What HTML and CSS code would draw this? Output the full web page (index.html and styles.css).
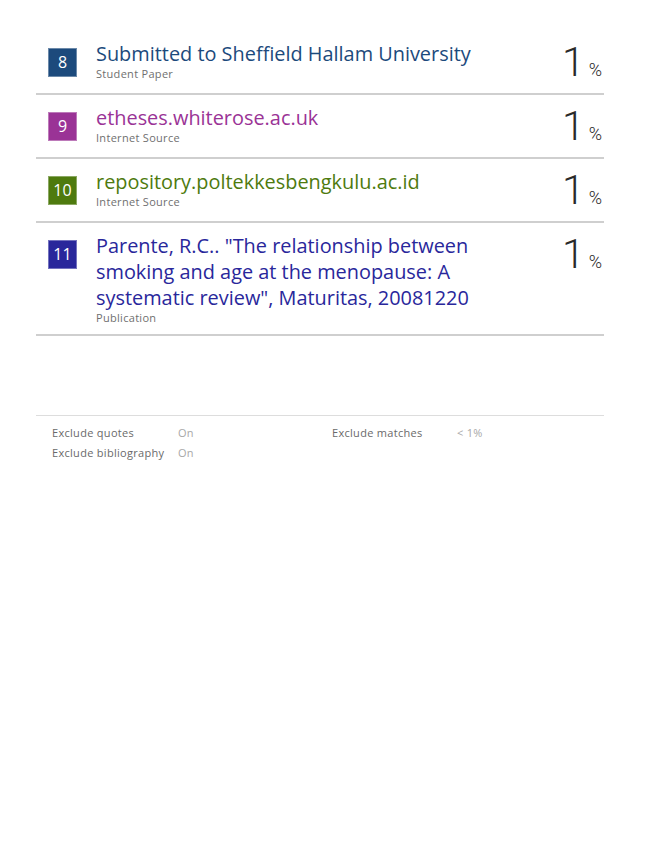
FILE: index.html
```html
<!DOCTYPE html>
<html>
<head>
<meta charset="utf-8">
<link rel="stylesheet" href="styles.css">
</head>
<body>
<div class="page">
  <div class="row">
    <div class="num c-blue">8</div>
    <div class="info">
      <div class="title t-blue">Submitted to Sheffield Hallam University</div>
      <div class="type">Student Paper</div>
    </div>
    <div class="pct"><span class="big">1</span><span class="sym">%</span></div>
  </div>
  <div class="row">
    <div class="num c-purple">9</div>
    <div class="info">
      <div class="title t-purple">etheses.whiterose.ac.uk</div>
      <div class="type">Internet Source</div>
    </div>
    <div class="pct"><span class="big">1</span><span class="sym">%</span></div>
  </div>
  <div class="row">
    <div class="num c-green">10</div>
    <div class="info">
      <div class="title t-green">repository.poltekkesbengkulu.ac.id</div>
      <div class="type">Internet Source</div>
    </div>
    <div class="pct"><span class="big">1</span><span class="sym">%</span></div>
  </div>
  <div class="row">
    <div class="num c-navy">11</div>
    <div class="info">
      <div class="title t-navy">Parente, R.C.. "The relationship between smoking and age at the menopause: A systematic review", Maturitas, 20081220</div>
      <div class="type">Publication</div>
    </div>
    <div class="pct"><span class="big">1</span><span class="sym">%</span></div>
  </div>

  <div class="footer">
    <div class="fgrid">
      <span class="flabel">Exclude quotes</span><span class="fval">On</span>
      <span class="flabel">Exclude matches</span><span class="fval">&lt; 1%</span>
      <span class="flabel">Exclude bibliography</span><span class="fval">On</span>
      <span></span><span></span>
    </div>
  </div>
</div>
</body>
</html>
```
FILE: styles.css
```css
html, body {
  margin: 0;
  padding: 0;
  background: #ffffff;
}
body {
  font-family: "Open Sans", "Noto Sans", sans-serif;
}
.page {
  width: 568px;
  margin-left: 36px;
  padding-top: 31px;
}
.row {
  display: flex;
  align-items: flex-start;
  padding: 10px 0 10px 12px;
  border-bottom: 2px solid #cfcfcf;
}
.num {
  width: 29px;
  height: 29px;
  margin-top: 7px;
  box-sizing: border-box;
  border: 1px solid rgba(255,255,255,0.35);
  color: #ffffff;
  font-family: "Open Sans", sans-serif;
  font-size: 16px;
  line-height: 27px;
  text-align: center;
  flex: none;
}
.c-blue { background: #1c4a7c; }
.c-purple { background: #9a3396; }
.c-green { background: #4e7a0e; }
.c-navy { background: #29279b; }
.info {
  margin-left: 19px;
  width: 380px;
}
.title {
  font-size: 19.9px;
  line-height: 26px;
}
.t-blue { color: #1c4a7c; }
.t-purple { color: #9a3396; }
.t-green { color: #4e7a0e; }
.t-navy { color: #29279b; }
.type {
  font-size: 11px;
  line-height: 13px;
  letter-spacing: 0.3px;
  color: #6f6f6f;
}
.pct {
  margin-left: auto;
  display: flex;
  align-items: baseline;
  color: #2a2a2a;
  padding-top: 2px;
  height: 40px;
}
.big {
  font-family: Roboto, sans-serif;
  font-weight: 300;
  font-size: 41px;
  line-height: 39px;
}
.sym {
  font-family: Roboto, sans-serif;
  font-weight: 300;
  font-size: 18px;
  line-height: 20px;
  margin-left: 4px;
  margin-right: 2px;
}
.footer {
  margin-top: 79px;
  border-top: 1px solid #dddddd;
  padding: 9px 0 0 16px;
}
.fgrid {
  display: grid;
  grid-template-columns: 126px 154px 125px auto;
  row-gap: 4px;
  font-size: 11px;
  line-height: 16px;
  letter-spacing: 0.3px;
}
.flabel { color: #6a6a6a; }
.fval { color: #a8a8a8; }
```
